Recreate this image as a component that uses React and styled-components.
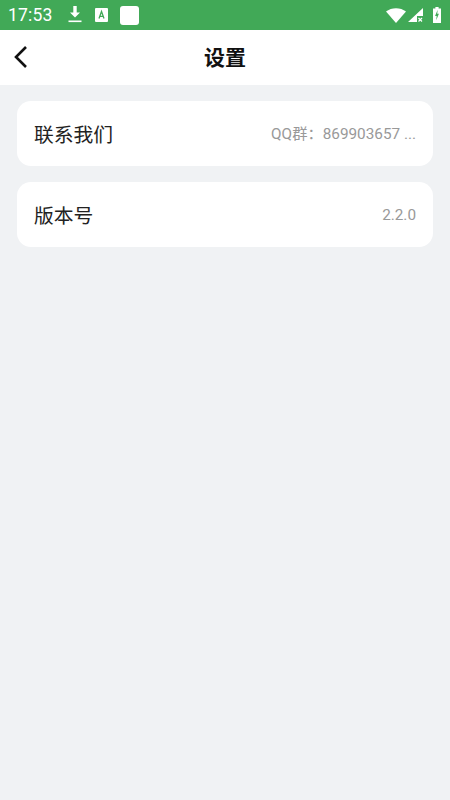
import React from 'react';
import styled, { createGlobalStyle } from 'styled-components';

const GlobalStyle = createGlobalStyle`
  html, body {
    margin: 0;
    padding: 0;
    height: 100%;
    background: #f0f2f4;
    font-family: Roboto, "Noto Sans CJK SC", sans-serif;
  }
  * { box-sizing: border-box; }
`;

const Page = styled.div`
  width: 450px;
  height: 800px;
  display: flex;
  flex-direction: column;
  overflow: hidden;
  background: #f0f2f4;
`;

const StatusBar = styled.div`
  height: 30px;
  background: #41a957;
  color: #fff;
  display: flex;
  align-items: center;
  padding: 0 9px 0 8px;
`;

const Clock = styled.span`
  font-size: 17.5px;
  letter-spacing: 0.2px;
  width: 59px;
`;

const StatusLeft = styled.div`
  display: flex;
  align-items: center;
  gap: 12px;
  flex: 1;
`;

const StatusRight = styled.div`
  display: flex;
  align-items: center;
  gap: 2px;
`;

const NavBar = styled.div`
  height: 55px;
  padding-bottom: 3px;
  background: #fff;
  display: flex;
  align-items: center;
  justify-content: center;
  position: relative;
`;

const BackButton = styled.button`
  position: absolute;
  left: 12px;
  top: 14px;
  padding: 0;
  border: 0;
  background: none;
  display: flex;
`;

const Title = styled.h1`
  margin: 0;
  font-size: 21px;
  font-weight: 700;
  color: #111;
  font-family: "Noto Sans CJK SC", sans-serif;
`;

const List = styled.div`
  display: flex;
  flex-direction: column;
  gap: 16px;
  padding: 16px 17px;
`;

const Row = styled.div`
  height: 65px;
  background: #fff;
  border-radius: 14px;
  display: flex;
  align-items: center;
  justify-content: space-between;
  padding: 0 17px;
`;

const Label = styled.span`
  font-size: 19.8px;
  color: #222;
  font-family: "Noto Sans CJK SC", sans-serif;
`;

const Value = styled.span`
  display: block;
  font-size: 15.3px;
  line-height: 20px;
  color: #999;
  font-family: Roboto, "Noto Sans CJK SC", sans-serif;
`;

const DownloadIcon = () => (
  <svg width="16" height="20" viewBox="0 0 16 20">
    <path d="M6.3 1h3.4v6.5H13L8 12.6 3 7.500h3.300z" fill="#fff" />
    <rect x="1.500" y="15.500" width="13" height="1.600" fill="#fff" />
  </svg>
);

const TranslateIcon = () => (
  <svg width="13" height="14" viewBox="0 0 13 14">
    <rect width="13" height="14" rx="1" fill="#fff" />
    <path d="M4 10.500 6.500 3.500 9 10.500M4.800 8.300h3.400" fill="none" stroke="#41a957" strokeWidth="1.300" />
  </svg>
);

const AppSquare = styled.div`
  width: 19px;
  height: 19px;
  background: #fff;
  border-radius: 3px;
`;

const WifiIcon = () => (
  <svg width="20" height="15" viewBox="0 0 20 15">
    <path d="M0 3.500C5.500-1 14.500-1 20 3.500L10 15z" fill="#fff" />
  </svg>
);

const SignalIcon = () => (
  <svg width="15" height="15" viewBox="0 0 15 15">
    <path d="M15 0v8H9v6H0z" fill="#fff" />
    <path d="M10.500 10l3.500 3.500M14 10l-3.500 3.500" stroke="#fff" strokeWidth="1.200" />
  </svg>
);

const BatteryIcon = () => (
  <svg width="8" height="16" viewBox="0 0 10 17" preserveAspectRatio="none" style={{ marginLeft: 8 }}>
    <path d="M3 0h4v1.500h3V17H0V1.500h3z" fill="#fff" />
    <path d="M5.800 3 2.600 9.500h2l-.6 4.500 3.400-6.800h-2.100z" fill="#41a957" />
  </svg>
);

const BackIcon = () => (
  <svg width="18" height="26" viewBox="0 0 18 26">
    <path d="M14 3 4 13l10 10" fill="none" stroke="#111" strokeWidth="2.600" />
  </svg>
);

const rows = [
  { label: '联系我们', value: 'QQ群：869903657 ...' },
  { label: '版本号', value: '2.2.0' },
];

export default function App() {
  return (
    <Page>
      <GlobalStyle />
      <StatusBar>
        <Clock>17:53</Clock>
        <StatusLeft>
          <DownloadIcon />
          <TranslateIcon />
          <AppSquare />
        </StatusLeft>
        <StatusRight>
          <WifiIcon />
          <SignalIcon />
          <BatteryIcon />
        </StatusRight>
      </StatusBar>
      <NavBar>
        <BackButton><BackIcon /></BackButton>
        <Title>设置</Title>
      </NavBar>
      <List>
        {rows.map((row) => (
          <Row key={row.label}>
            <Label>{row.label}</Label>
            <Value>{row.value}</Value>
          </Row>
        ))}
      </List>
    </Page>
  );
}
